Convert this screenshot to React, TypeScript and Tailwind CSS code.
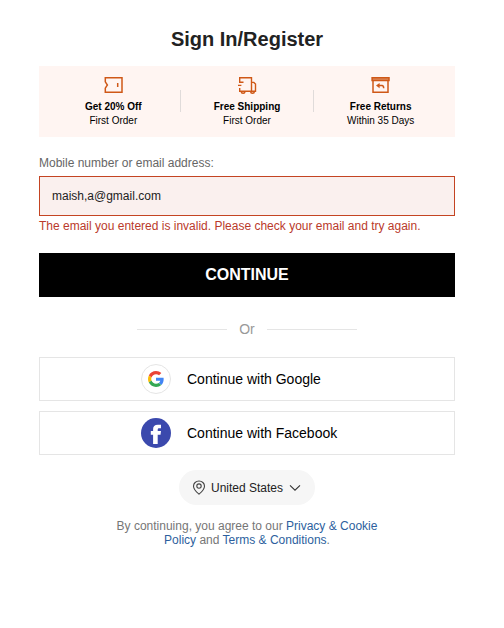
import type { ReactNode } from "react";

function CouponIcon() {
  return (
    <svg width="20" height="18" viewBox="0 0 20 18" fill="none" stroke="#cf5817" strokeWidth="1.5">
      <path d="M2.3 1.8H19V16.2H2.3V12.2L4.4 9L2.3 5.8Z" />
      <path d="M14.7 7V11" />
    </svg>
  );
}

function TruckIcon() {
  return (
    <svg width="20" height="18" viewBox="0 0 20 18" fill="none" stroke="#cf5817" strokeWidth="1.4">
      <path d="M2.7 6.3V1.8H14.5V15.2M6.5 6.2H2M4.4 9.4H1M2.7 12V15.2H18.5V8L16.8 6.4H14.5" />
      <path d="M4.3 15.4C4.3 17.8 7.9 17.8 7.9 15.4M13.7 15.4C13.7 17.8 17.3 17.8 17.3 15.4" />
    </svg>
  );
}

function ReturnIcon() {
  return (
    <svg width="20" height="18" viewBox="0 0 20 18" fill="none" stroke="#cf5817" strokeWidth="1.5">
      <path d="M1.1 1.8H18V4.6H1.1Z" fill="#dd8b5e" />
      <path d="M2 4.6V16.2H17V4.6" />
      <path d="M5 9.6L8.6 6.9V12.3Z" fill="#cf5817" stroke="none" />
      <path d="M7 9.6H11Q12.7 9.7 12.7 12.2" />
    </svg>
  );
}

function Perk({ icon, title, note }: { icon: ReactNode; title: string; note: string }) {
  return (
    <div className="flex flex-1 flex-col items-center whitespace-nowrap text-[10px] leading-[14px] text-black">
      {icon}
      <b className="mt-[6px]">{title}</b>
      <span>{note}</span>
    </div>
  );
}

function GoogleLogo() {
  return (
    <span className="flex size-[30px] items-center justify-center rounded-full border border-[#e5e5e5] bg-white">
      <svg width="16" height="16" viewBox="0 0 48 48">
        <path fill="#EA4335" d="M24 9.5c3.54 0 6.71 1.22 9.21 3.6l6.85-6.85C35.9 2.38 30.47 0 24 0 14.62 0 6.51 5.38 2.56 13.22l7.98 6.19C12.43 13.72 17.74 9.5 24 9.5z" />
        <path fill="#4285F4" d="M46.98 24.55c0-1.57-.15-3.09-.38-4.55H24v9.02h12.94c-.58 2.96-2.26 5.48-4.78 7.18l7.73 6c4.51-4.18 7.09-10.36 7.09-17.65z" />
        <path fill="#FBBC05" d="M10.53 28.59c-.48-1.45-.76-2.99-.76-4.59s.27-3.14.76-4.59l-7.98-6.19C.92 16.46 0 20.12 0 24c0 3.88.92 7.54 2.56 10.78l7.97-6.19z" />
        <path fill="#34A853" d="M24 48c6.48 0 11.93-2.13 15.89-5.81l-7.73-6c-2.15 1.45-4.92 2.3-8.16 2.3-6.26 0-11.57-4.22-13.47-9.91l-7.98 6.19C6.51 42.62 14.62 48 24 48z" />
      </svg>
    </span>
  );
}

function FacebookLogo() {
  return (
    <svg width="30" height="30" viewBox="0 0 30 30">
      <circle cx="15" cy="15" r="15" fill="#3b49ad" />
      <path fill="#fff" d="M12.1 26V16.8H9.8V13H12.1V11.2C12.1 8.2 13.5 6.7 16.9 6.7H20V10.3H18.1C17 10.3 16.7 10.9 16.7 11.9V13H20L19.5 16.8H16.7V26Z" />
    </svg>
  );
}

function SocialButton({ icon, label }: { icon: ReactNode; label: string }) {
  return (
    <button className="flex h-11 w-full items-center border border-[#e5e5e5] pl-[101px] text-black">
      {icon}
      <span className="ml-4 text-[14px]">{label}</span>
    </button>
  );
}

export default function App() {
  return (
    <main className="h-[628px] w-[504px] overflow-hidden bg-white pl-[39px] pr-[49px] font-['Liberation_Sans',Arial,sans-serif]">
      <h1 className="pt-[27px] text-center text-[20px] font-bold leading-6 text-[#222]">Sign In/Register</h1>

      <section className="mt-[15px] flex h-[71px] bg-[#fff5f2] px-2 pt-[10px]">
        <Perk icon={<CouponIcon />} title="Get 20% Off" note="First Order" />
        <i className="mt-[14px] h-[22px] w-px bg-[#e0dbda]" />
        <Perk icon={<TruckIcon />} title="Free Shipping" note="First Order" />
        <i className="mt-[14px] h-[22px] w-px bg-[#e0dbda]" />
        <Perk icon={<ReturnIcon />} title="Free Returns" note="Within 35 Days" />
      </section>

      <form>
        <label htmlFor="account" className="mt-[19px] block text-[12px] leading-[14px] text-[#666]">
          Mobile number or email address:
        </label>
        <input
          id="account"
          defaultValue="maish,a@gmail.com"
          className="mt-[6px] block h-10 w-full border border-[#c44422] bg-[#faf0ee] px-3 text-[12px] text-[#222] outline-none"
        />
        <p className="mt-[3px] text-[12px] leading-[14px] text-[#ba3a2b]">
          The email you entered is invalid. Please check your email and try again.
        </p>
        <button type="button" className="mt-5 block h-11 w-full bg-black text-[16px] font-bold text-white">
          CONTINUE
        </button>
      </form>

      <div className="mx-auto mt-6 flex h-4 w-[220px] items-center justify-between text-[14px] leading-4 text-[#999]">
        <i className="h-px w-[90px] bg-[#e5e5e5]" />
        Or
        <i className="h-px w-[90px] bg-[#e5e5e5]" />
      </div>

      <div className="mt-5 flex flex-col gap-[10px]">
        <SocialButton icon={<GoogleLogo />} label="Continue with Google" />
        <SocialButton icon={<FacebookLogo />} label="Continue with Facebook" />
      </div>

      <button className="mx-auto mt-[15px] flex h-[35px] w-[136px] items-center rounded-full bg-[#f6f6f6] pl-[13px] text-[12px] text-[#222]">
        <svg width="14" height="16" viewBox="0 0 14 16" fill="none" stroke="#444" strokeWidth="1.1">
          <path d="M7 14.2C4 11.6 1.5 9 1.5 6.2a5.5 5.2 0 0 1 11 0C12.5 9 10 11.6 7 14.2Z" />
          <circle cx="7" cy="6.1" r="2.2" />
        </svg>
        <span className="ml-[5px]">United States</span>
        <svg className="ml-[6px]" width="12" height="8" viewBox="0 0 12 8" fill="none" stroke="#333" strokeWidth="1.1">
          <path d="M1 1.4L6 6.2L11 1.4" />
        </svg>
      </button>

      <p className="mt-[14px] text-center text-[12px] leading-[14px] text-[#767676]">
        By continuing, you agree to our <a className="text-[#2d5f9e]">Privacy &amp; Cookie</a>
        <br />
        <a className="text-[#2d5f9e]">Policy</a> and <a className="text-[#2d5f9e]">Terms &amp; Conditions</a>.
      </p>
    </main>
  );
}
